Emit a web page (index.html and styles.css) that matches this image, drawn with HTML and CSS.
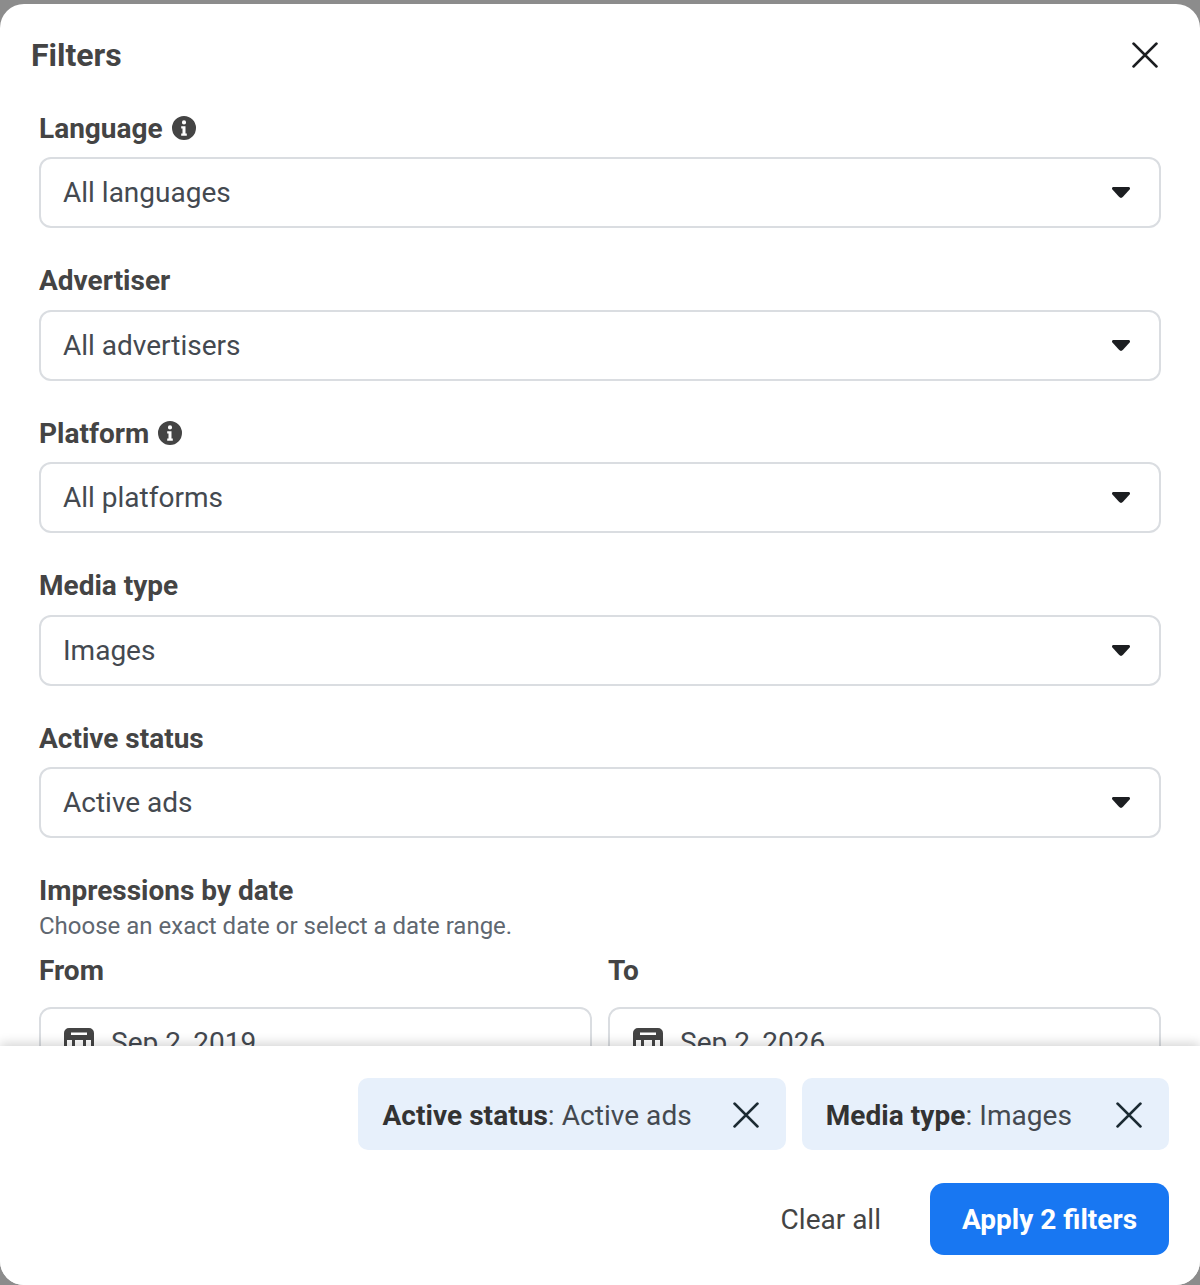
FILE: index.html
```html
<!DOCTYPE html>
<html lang="en">
<head>
  <meta charset="UTF-8">
  <title>Filters</title>
  <link rel="stylesheet" href="styles.css">
</head>
<body>

  <svg class="sprites" width="0" height="0">
    <symbol id="icon-close" viewBox="0 0 24 24">
      <path d="M1.5 1.5 22.5 22.5M22.5 1.5 1.5 22.5" fill="none" stroke="currentColor" stroke-width="2.6" stroke-linecap="round"/>
    </symbol>
    <symbol id="icon-info" viewBox="0 0 24 24">
      <path fill-rule="evenodd" d="M12 0a12 12 0 1 1 0 24a12 12 0 0 1 0-24ZM12 4.300a2.100 2.100 0 1 0 0 4.200a2.100 2.100 0 0 0 0-4.200ZM9.200 10.200v2.200h1.300v5.200H9.200v2.200h5.600v-2.200h-1.300v-7.400Z" fill="currentColor"/>
    </symbol>
    <symbol id="icon-caret" viewBox="0 0 18 11">
      <path d="M1.500 0h15c1.300 0 2 1.500 1.100 2.500L11 9.800a2.700 2.700 0 0 1-4 0L.4 2.500C-.5 1.500.2 0 1.500 0Z" fill="currentColor"/>
    </symbol>
    <symbol id="icon-calendar" viewBox="0 0 32 32">
      <path fill-rule="evenodd" d="M6 1h20a5 5 0 0 1 5 5v20a5 5 0 0 1-5 5H6a5 5 0 0 1-5-5V6a5 5 0 0 1 5-5ZM4 13v13a2 2 0 0 0 2 2h3V13ZM12 13v15h8V13ZM23 13v15h3a2 2 0 0 0 2-2V13ZM8 5.500v2.500h16V5.500Z" fill="currentColor"/>
    </symbol>
  </svg>

  <div class="modal">

    <div class="modal-body">
      <div class="modal-header">
        <h2>Filters</h2>
        <button class="close-btn"><svg class="icon-x-lg"><use href="#icon-close"/></svg></button>
      </div>

      <div class="field">
        <label>Language <svg class="icon-info"><use href="#icon-info"/></svg></label>
        <div class="select"><span>All languages</span><svg class="icon-caret"><use href="#icon-caret"/></svg></div>
      </div>

      <div class="field">
        <label>Advertiser</label>
        <div class="select"><span>All advertisers</span><svg class="icon-caret"><use href="#icon-caret"/></svg></div>
      </div>

      <div class="field">
        <label>Platform <svg class="icon-info"><use href="#icon-info"/></svg></label>
        <div class="select"><span>All platforms</span><svg class="icon-caret"><use href="#icon-caret"/></svg></div>
      </div>

      <div class="field">
        <label>Media type</label>
        <div class="select"><span>Images</span><svg class="icon-caret"><use href="#icon-caret"/></svg></div>
      </div>

      <div class="field">
        <label>Active status</label>
        <div class="select"><span>Active ads</span><svg class="icon-caret"><use href="#icon-caret"/></svg></div>
      </div>

      <div class="dates">
        <label>Impressions by date</label>
        <p>Choose an exact date or select a date range.</p>
        <div class="date-row">
          <div class="date-col">
            <label>From</label>
            <div class="select date-input"><svg class="icon-cal"><use href="#icon-calendar"/></svg><span>Sep 2, 2019</span></div>
          </div>
          <div class="date-col">
            <label>To</label>
            <div class="select date-input"><svg class="icon-cal"><use href="#icon-calendar"/></svg><span>Sep 2, 2026</span></div>
          </div>
        </div>
      </div>
    </div>

    <div class="modal-footer">
      <div class="chips">
        <div class="chip"><span><b>Active status</b>: Active ads</span><svg class="icon-x"><use href="#icon-close"/></svg></div>
        <div class="chip"><span><b>Media type</b>: Images</span><svg class="icon-x"><use href="#icon-close"/></svg></div>
      </div>
      <div class="actions">
        <button class="btn-clear">Clear all</button>
        <button class="btn-apply">Apply 2 filters</button>
      </div>
    </div>

  </div>

</body>
</html>
```

FILE: styles.css
```css
* {
  box-sizing: border-box;
}

body {
  margin: 0;
  height: 1285px;
  overflow: hidden;
  padding-top: 4px;
  font-family: Roboto, "Liberation Sans", sans-serif;
  background-color: #8c8c8c;
  color: #444950;
}

.sprites {
  position: absolute;
}

.modal {
  height: 1281px;
  background-color: #fff;
  border-radius: 24px;
  display: flex;
  flex-direction: column;
  overflow: hidden;
}

.modal-body {
  height: 1042px;
  overflow: hidden;
  padding: 0 39px;
}

.modal-header {
  display: flex;
  justify-content: space-between;
  align-items: center;
  height: 110px;
  padding-bottom: 8px;
  margin-left: -8px;
}

.modal-header h2 {
  margin: 0;
  font-size: 32px;
  font-weight: 700;
  color: #444;
}

.close-btn {
  background: none;
  border: none;
  padding: 0;
  margin-right: 3px;
  display: flex;
  color: #1c1e21;
}

.icon-x-lg {
  width: 26px;
  height: 26px;
}

.field {
  margin-bottom: 38.500px;
}

label {
  display: flex;
  align-items: center;
  gap: 9px;
  height: 28px;
  font-size: 28px;
  font-weight: 700;
  color: #444;
}

.icon-info {
  width: 24px;
  height: 24px;
  color: #444;
}

.select {
  display: flex;
  align-items: center;
  justify-content: space-between;
  height: 71px;
  margin-top: 15px;
  padding: 0 29px 0 22px;
  border: 2px solid #dadde1;
  border-radius: 12px;
  font-size: 28px;
  color: #444950;
}

.icon-caret {
  width: 18px;
  height: 11px;
  color: #1c1e21;
}

.dates p {
  margin: 5px 0 0;
  height: 32px;
  font-size: 24px;
  line-height: 32px;
  color: #606770;
}

.date-row {
  display: grid;
  grid-template-columns: 1fr 1fr;
  gap: 16px;
  margin-top: 15px;
}

.date-input {
  justify-content: flex-start;
  gap: 16px;
  height: 72px;
  margin-top: 22px;
}

.icon-cal {
  width: 32px;
  height: 32px;
  color: #444;
}

.modal-footer {
  position: relative;
  flex: 1;
  background-color: #fff;
  padding: 32px 31px 0;
  box-shadow: 0 -3px 10px rgba(0, 0, 0, 0.16);
}

.chips {
  display: flex;
  justify-content: flex-end;
  gap: 16px;
}

.chip {
  display: flex;
  align-items: center;
  gap: 41px;
  height: 72px;
  padding: 2px 27px 0 24px;
  background-color: #e7f0fb;
  border-radius: 10px;
  font-size: 28px;
  letter-spacing: 0.05px;
  color: #444950;
}

.chip + .chip {
  gap: 44px;
}

.chip b {
  color: #333;
}

.icon-x {
  width: 26px;
  height: 26px;
  color: #1c2b33;
}

.actions {
  display: flex;
  justify-content: flex-end;
  align-items: center;
  gap: 49px;
  margin-top: 33px;
}

.btn-clear {
  background: none;
  border: none;
  padding: 0;
  font-family: inherit;
  font-size: 28px;
  color: #444;
}

.btn-apply {
  width: 239px;
  height: 72px;
  background-color: #1877f2;
  border: none;
  border-radius: 14px;
  font-family: inherit;
  font-size: 28px;
  font-weight: 700;
  color: #fff;
}
```
